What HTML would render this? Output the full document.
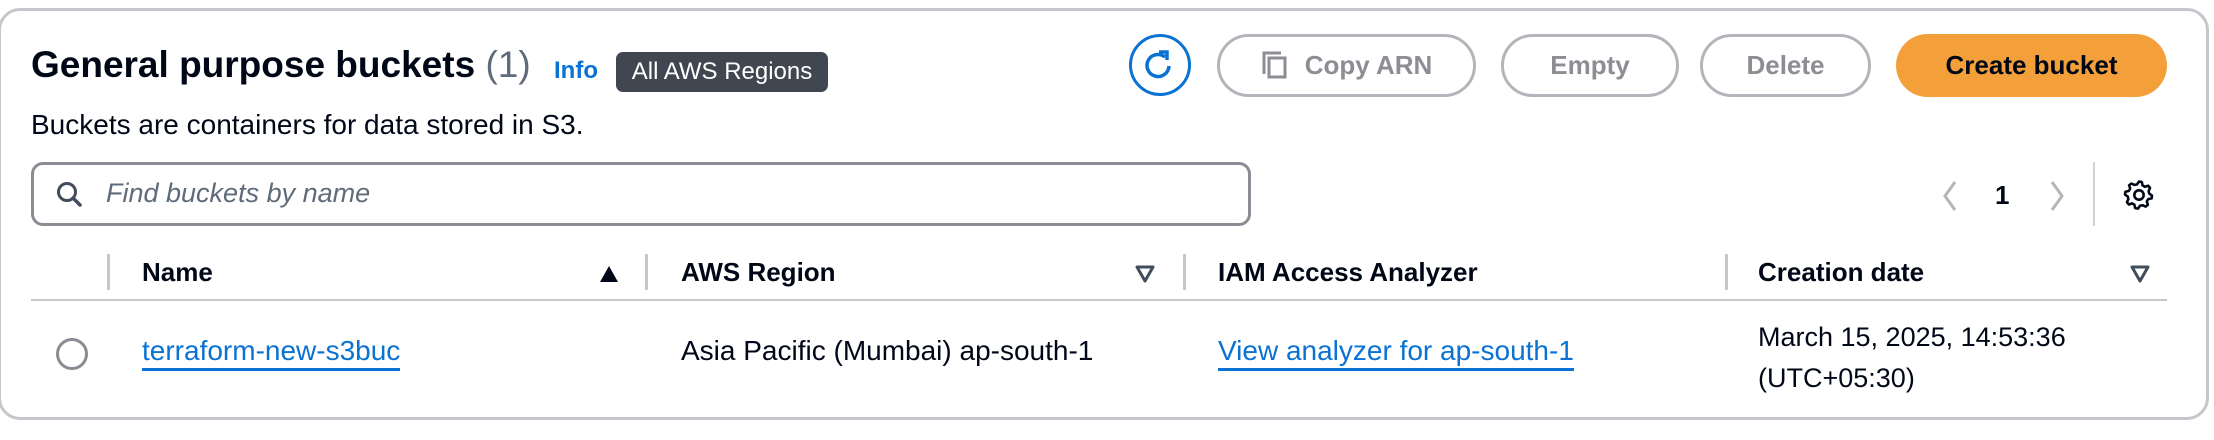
<!DOCTYPE html>
<html><head><meta charset="utf-8"><style>
body{margin:0;width:2214px;height:440px;background:#fff;font-family:"Liberation Sans",sans-serif;position:relative;overflow:hidden;color:#000716}
.card{position:absolute;left:-2px;top:8px;width:2205px;height:406px;border:3px solid #c6c6cd;border-radius:22px}
.a{position:absolute;white-space:nowrap}
.btn{position:absolute;top:34px;height:57px;border:3px solid #b4b4bb;border-radius:32px;box-sizing:content-box;color:#8d8d94;font-weight:bold;font-size:26px;display:flex;align-items:center;justify-content:center}
.sep{position:absolute;width:3px;background:#c6c6cd;top:254px;height:36px}
.h{position:absolute;top:257px;font-weight:bold;font-size:26px;color:#000716}
.lnk{color:#0972d3;border-bottom:3px solid #0972d3;padding-bottom:2px}
</style></head><body>
<div class="card"></div>
<div class="a" style="left:31px;top:44px;font-size:37px;font-weight:bold">General purpose buckets <span style="font-weight:normal;color:#5f6b7a">(1)</span></div>
<div class="a" style="left:554px;top:57px;font-size:24px;font-weight:bold;color:#0972d3">Info</div>
<div class="a" style="left:616px;top:52px;width:212px;height:40px;background:#414750;border-radius:7px;color:#fff;font-size:24px;display:flex;align-items:center;justify-content:center">All AWS Regions</div>
<div class="a" style="left:31px;top:109px;font-size:28px;color:#000716">Buckets are containers for data stored in S3.</div>
<div class="a" style="left:31px;top:162px;width:1214px;height:58px;border:3px solid #8c8c94;border-radius:12px"></div>
<svg class="a" style="left:55px;top:180px" width="30" height="30" viewBox="0 0 30 30"><circle cx="12" cy="12" r="8.5" fill="none" stroke="#414d5c" stroke-width="3"/><path d="M18 18l7 7" stroke="#414d5c" stroke-width="3.5" stroke-linecap="round"/></svg>
<div class="a" style="left:106px;top:178px;font-size:27px;font-style:italic;color:#5f6b7a">Find buckets by name</div>
<div class="a" style="left:1129px;top:34px;width:56px;height:56px;border:3px solid #0972d3;border-radius:50%"></div>
<svg class="a" style="left:1140px;top:47px" width="36" height="36" viewBox="0 0 36 36"><path d="M25 10A11 11 0 1 0 29 19" fill="none" stroke="#0972d3" stroke-width="3.5"/><path d="M19 5h8v8" fill="none" stroke="#0972d3" stroke-width="3.5"/></svg>
<div class="btn" style="left:1217px;width:253px"><svg width="30" height="32" viewBox="0 0 30 32" style="margin-right:14px"><rect x="8" y="8" width="16" height="19" fill="none" stroke="#8d8d94" stroke-width="3"/><path d="M3 24V3h17" fill="none" stroke="#8d8d94" stroke-width="3"/></svg>Copy ARN</div>
<div class="btn" style="left:1501px;width:172px">Empty</div>
<div class="btn" style="left:1700px;width:165px">Delete</div>
<div class="btn" style="left:1896px;width:271px;height:63px;border:none;background:#f3a03b;color:#000716">Create bucket</div>
<svg class="a" style="left:1940px;top:178px" width="20" height="36" viewBox="0 0 20 36"><path d="M15 4L5 18l10 14" fill="none" stroke="#b4b4bb" stroke-width="3"/></svg>
<div class="a" style="left:1995px;top:180px;font-size:26px;font-weight:bold">1</div>
<svg class="a" style="left:2047px;top:178px" width="20" height="36" viewBox="0 0 20 36"><path d="M5 4l10 14L5 32" fill="none" stroke="#b4b4bb" stroke-width="3"/></svg>
<div class="a" style="left:2093px;top:162px;width:2px;height:64px;background:#d1d1d6"></div>
<svg class="a" style="left:2122px;top:178px" width="34" height="34" viewBox="0 0 24 24"><path d="M12 2.5l2 .3.5 2.4 1.7 1 2.3-.8 1.3 1.6-1 2.2.4 1.8 2 1.4-.3 2-2.4.5-1 1.7.8 2.3-1.6 1.3-2.2-1-1.8.4-1.4 2-2-.3-.5-2.4-1.7-1-2.3.8-1.3-1.6 1-2.2-.4-1.8-2-1.4.3-2 2.4-.5 1-1.7-.8-2.3 1.6-1.3 2.2 1 1.8-.4z" fill="none" stroke="#000716" stroke-width="1.8" stroke-linejoin="round"/><circle cx="12" cy="12" r="3.3" fill="none" stroke="#000716" stroke-width="1.8"/></svg>
<div class="sep" style="left:107px"></div>
<div class="sep" style="left:645px"></div>
<div class="sep" style="left:1183px"></div>
<div class="sep" style="left:1725px"></div>
<div class="h" style="left:142px">Name</div>
<svg class="a" style="left:599px;top:265px" width="20" height="18"><path d="M10 1L19 17H1z" fill="#000716"/></svg>
<div class="h" style="left:681px">AWS Region</div>
<svg class="a" style="left:1135px;top:265px" width="20" height="18"><path d="M2 2H18L10 16z" fill="none" stroke="#414d5c" stroke-width="3" stroke-linejoin="round"/></svg>
<div class="h" style="left:1218px">IAM Access Analyzer</div>
<div class="h" style="left:1758px">Creation date</div>
<svg class="a" style="left:2130px;top:265px" width="20" height="18"><path d="M2 2H18L10 16z" fill="none" stroke="#414d5c" stroke-width="3" stroke-linejoin="round"/></svg>
<div class="a" style="left:31px;top:299px;width:2136px;height:2px;background:#c6c6cd"></div>
<div class="a" style="left:56px;top:338px;width:26px;height:26px;border:3px solid #8c8c94;border-radius:50%"></div>
<div class="a" style="left:142px;top:335px;font-size:28px"><span class="lnk">terraform-new-s3buc</span></div>
<div class="a" style="left:681px;top:335px;font-size:28px">Asia Pacific (Mumbai) ap-south-1</div>
<div class="a" style="left:1218px;top:335px;font-size:28px"><span class="lnk">View analyzer for ap-south-1</span></div>
<div class="a" style="left:1758px;top:317px;font-size:27px;line-height:41px">March 15, 2025, 14:53:36<br>(UTC+05:30)</div>
</body></html>
